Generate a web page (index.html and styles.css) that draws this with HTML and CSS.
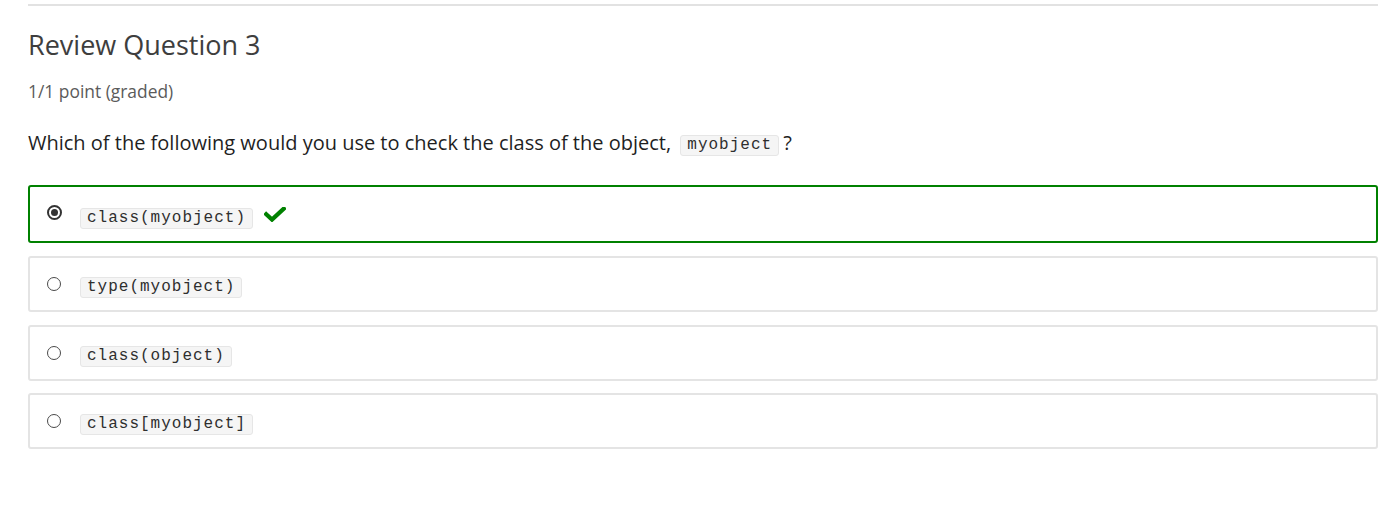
FILE: index.html
```html
<!DOCTYPE html>
<html>
<head>
<meta charset="utf-8">
<link rel="stylesheet" href="styles.css">
</head>
<body>
<div class="problem">
  <h3 class="title">Review Question 3</h3>
  <div class="points">1/1 point (graded)</div>
  <p class="question">Which of the following would you use to check the class of the object, <code>myobject</code>?</p>
  <div class="choices">
    <label class="choice correct">
      <span class="radio checked"></span>
      <code>class(myobject)</code>
      <svg class="check" width="22" height="15" viewBox="0 0 22 15"><polyline points="2.2,7.2 8,12.6 19.8,1.6" fill="none" stroke="#008100" stroke-width="4.2" stroke-linecap="square" stroke-linejoin="miter"/></svg>
    </label>
    <label class="choice">
      <span class="radio"></span>
      <code>type(myobject)</code>
    </label>
    <label class="choice">
      <span class="radio"></span>
      <code>class(object)</code>
    </label>
    <label class="choice">
      <span class="radio"></span>
      <code>class[myobject]</code>
    </label>
  </div>
</div>
</body>
</html>
```
FILE: styles.css
```css
html, body {
  margin: 0;
  padding: 0;
  background: #fff;
}
body {
  font-family: "Open Sans", "Liberation Sans", sans-serif;
  color: #313131;
}
.problem {
  width: 1350px;
  margin-left: 28px;
  margin-top: 4px;
  border-top: 2px solid #e2e2e2;
}
.title {
  margin: 23px 0 0;
  font-size: 27px;
  font-weight: 400;
  line-height: 32px;
  color: #3e3e3e;
}
.points {
  margin-top: 18px;
  font-size: 17.4px;
  line-height: 24px;
  color: #5b5b5b;
}
.question {
  margin: 26px 0 0;
  font-size: 20px;
  line-height: 28px;
  color: #1f1f1f;
}
code {
  font-family: "Liberation Mono", "Courier New", monospace;
  font-size: 16px;
  line-height: 17px;
  letter-spacing: 1px;
  color: #2e2e2e;
  background: #f5f5f5;
  border: 1px solid #e6e6e6;
  border-radius: 3px;
  padding: 1px 6px 1px 6px;
  display: inline-block;
}
.question code {
  vertical-align: 1px;
  margin: 0 4px 0 4px;
}
.choices {
  margin-top: 28px;
  display: flex;
  flex-direction: column;
  gap: 13px;
}
.choice {
  display: flex;
  align-items: flex-start;
  box-sizing: border-box;
  height: 56px;
  border: 2px solid #e4e4e4;
  border-radius: 3px;
  padding: 19px 0 0 17px;
}
.choice:last-child {
  margin-top: -1px;
}
.choice.correct {
  height: 58px;
  padding-top: 21px;
  border-color: #008100;
}
.radio {
  box-sizing: border-box;
  width: 14px;
  height: 14px;
  border: 1px solid #4a4a4a;
  border-radius: 50%;
  margin-right: 19px;
  position: relative;
  background: #fff;
  flex: none;
}
.radio.checked {
  width: 15px;
  height: 15px;
  margin-top: -3px;
  margin-right: 18px;
  border: 2px solid #333;
}
.radio.checked::after {
  content: "";
  position: absolute;
  left: 2px;
  top: 2px;
  width: 7px;
  height: 7px;
  border-radius: 50%;
  background: #333;
}
.check {
  margin-left: 11px;
  margin-top: -1px;
  flex: none;
}
```
